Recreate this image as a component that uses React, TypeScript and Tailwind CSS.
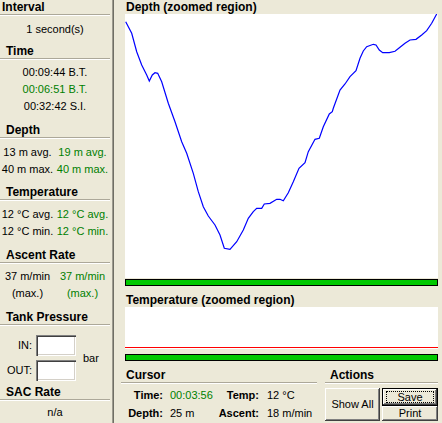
import React from "react";

// depth trace, in page pixels (chart box starts at 125,14)
const depthTrace: Array<[number, number]> = [
  [125.7, 21.7], [131.7, 33.3], [136.7, 51.7], [141.7, 65], [146.7, 75], [149.3, 81],
  [152.3, 75], [155, 72.7], [157.7, 73.3], [161.7, 81.7], [168.3, 103.3], [175, 121.7],
  [181.7, 141.7], [186.7, 153.3], [193.3, 173.3], [198.3, 191.7], [203.3, 206.7],
  [208.3, 216], [215, 225], [220, 235], [224.3, 248.3], [230, 249.3], [236.7, 241.7],
  [243.3, 230], [248.3, 218.3], [253.3, 211.7], [256.7, 208.3], [261.7, 208.3],
  [264.3, 204], [270, 203.3], [276.7, 199.3], [280, 199.3], [283.3, 200.7],
  [288.3, 192.7], [293.3, 181.7], [299, 168.3], [305, 162.7], [308.3, 151.7],
  [315, 139.3], [319.3, 138.3], [323.3, 126.7], [329.3, 114], [332.3, 111.7],
  [333.3, 108.3], [340, 90], [345, 84], [350, 76.7], [356, 70.7], [360, 58.3],
  [363.3, 51], [366.7, 46.7], [373.3, 44.3], [376, 45], [379.3, 50], [382.7, 52.7],
  [389.3, 52.7], [395, 51.3], [400, 47.3], [405, 43.3], [410, 40], [416, 39.3],
  [421.7, 35], [426.7, 30.7], [431.7, 23.3], [436.7, 14],
];

function Header({ title, first }: { title: string; first?: boolean }) {
  return (
    <div>
      <div className={`h-[14px] leading-[14px] text-[12px] font-bold ${first ? "pl-[2px]" : "pl-[6px]"}`}>{title}</div>
      <div className="w-[110px] h-[2px] border-t border-t-[#aca899] border-b border-b-white" />
    </div>
  );
}

function Row({ children, className = "" }: { children: React.ReactNode; className?: string }) {
  return <div className={`h-[17px] leading-[17px] w-[110px] text-center ${className}`}>{children}</div>;
}

function PairRow({ left, right, className = "" }: { left: string; right: string; className?: string }) {
  return (
    <div className={`h-[17px] leading-[17px] w-[110px] flex ${className}`}>
      <span className="w-[55px] text-center">{left}</span>
      <span className="w-[55px] text-center text-[#008000]">{right}</span>
    </div>
  );
}

function GreenBar() {
  return <div className="ml-[10px] w-[313px] h-[7px] border border-black bg-[#00c800]" />;
}

const btn =
  "relative bg-[#ece9d8] text-[11px] leading-none shadow-[inset_-1px_-1px_0_#404040,inset_1px_1px_0_#ffffff,inset_-2px_-2px_0_#808080] flex items-center justify-center";

const field =
  "w-[40px] h-[21px] bg-white shadow-[inset_1px_1px_0_#808080,inset_2px_2px_0_#404040,inset_-1px_-1px_0_#ffffff,inset_-2px_-2px_0_#d4d0c8]";

export default function App() {
  return (
    <div className="w-[442px] h-[423px] overflow-hidden bg-[#ece9d8] flex font-['Liberation_Sans',Arial,sans-serif] text-[11px] text-black">
      {/* left info panel */}
      <div className="w-[112px] flex flex-col [&>*]:shrink-0">
        <Header title="Interval" first />
        <Row className="mt-[5px]">1 second(s)</Row>

        <div className="mt-[6px]"><Header title="Time" /></div>
        <Row className="mt-[4px]">00:09:44 B.T.</Row>
        <Row className="text-[#008000]">00:06:51 B.T.</Row>
        <Row>00:32:42 S.I.</Row>

        <div className="mt-[8px]"><Header title="Depth" /></div>
        <PairRow className="mt-[5px]" left="13 m avg." right="19 m avg." />
        <PairRow left="40 m max." right="40 m max." />

        <div className="mt-[7px]"><Header title="Temperature" /></div>
        <PairRow className="mt-[5px]" left="12 °C avg." right="12 °C avg." />
        <PairRow left="12 °C min." right="12 °C min." />

        <div className="mt-[8px]"><Header title="Ascent Rate" /></div>
        <PairRow className="mt-[4px]" left="37 m/min" right="37 m/min" />
        <PairRow left="(max.)" right="(max.)" />

        <div className="mt-[8px]"><Header title="Tank Pressure" /></div>
        <div className="mt-[9px] flex">
          <div className="w-[36px] flex flex-col">
            <div className="h-[21px] leading-[21px] text-right pr-[4px]">IN:</div>
            <div className="h-[21px] leading-[21px] mt-[4px] text-right pr-[4px]">OUT:</div>
          </div>
          <div className="flex flex-col gap-[4px]">
            <div className={field} />
            <div className={field} />
          </div>
          <div className="self-center ml-[7px]">bar</div>
        </div>

        <div className="mt-[4px]"><Header title="SAC Rate" /></div>
        <Row className="mt-[3px]">n/a</Row>
      </div>

      {/* splitter */}
      <div className="w-px bg-[#9d9b8f]" />
      <div className="w-px bg-[#6f6e64]" />
      <div className="w-px" />

      {/* charts + cursor */}
      <div className="flex-1 flex flex-col [&>*]:shrink-0">
        <div className="h-[14px] leading-[14px] pl-[11px] text-[12px] font-bold">Depth (zoomed region)</div>
        <div className="ml-[10px] w-[313px] h-[264px] bg-white">
          <svg width="313" height="264" viewBox="125 14 313 264" className="block">
            <polyline
              points={depthTrace.map(([x, y]) => `${x},${y}`).join(" ")}
              fill="none"
              stroke="#0000ff"
              strokeWidth={1.2}
            />
          </svg>
        </div>
        <div className="mt-[1px]"><GreenBar /></div>

        <div className="mt-[7px] h-[14px] leading-[14px] pl-[11px] text-[12px] font-bold">Temperature (zoomed region)</div>
        <div className="ml-[10px] w-[313px] h-[42px] bg-white flex flex-col justify-end pb-[1px]">
          <div className="h-px bg-[#ff0000]" />
        </div>
        <div className="mt-[5px]"><GreenBar /></div>

        <div className="mt-[7px] flex items-start">
          {/* cursor readout */}
          <div className="ml-[6px] w-[196px]">
            <div className="h-[14px] leading-[14px] pl-[5px] text-[12px] font-bold">Cursor</div>
            <div className="h-[2px] border-t border-t-[#aca899] border-b border-b-white" />
            <div className="mt-[2px] h-[18px] leading-[18px] flex">
              <span className="w-[42px] text-right font-bold">Time:</span>
              <span className="ml-[7px] w-[48px] text-[#008000]">00:03:56</span>
              <span className="w-[41px] text-right font-bold">Temp:</span>
              <span className="ml-[8px]">12 °C</span>
            </div>
            <div className="h-[18px] leading-[18px] flex">
              <span className="w-[42px] text-right font-bold">Depth:</span>
              <span className="ml-[7px] w-[48px]">25 m</span>
              <span className="w-[41px] text-right font-bold">Ascent:</span>
              <span className="ml-[8px]">18 m/min</span>
            </div>
          </div>

          {/* actions */}
          <div className="ml-[8px] w-[113px]">
            <div className="h-[14px] leading-[14px] pl-[5px] text-[12px] font-bold">Actions</div>
            <div className="h-[2px] border-t border-t-[#aca899] border-b border-b-white" />
            <div className="mt-[4px] flex items-start">
              <button type="button" className={`${btn} w-[55px] h-[33px]`}>Show All</button>
              <div className="ml-[2px] flex flex-col">
                <div className="w-[56px] h-[18px] border border-black">
                  <button type="button" className={`${btn} w-full h-full`}>
                    <span className="absolute inset-x-[3px] inset-y-[2px] border border-dotted border-black" />
                    Save
                  </button>
                </div>
                <button type="button" className={`${btn} w-[56px] h-[15px]`}>Print</button>
              </div>
            </div>
          </div>
        </div>
      </div>
    </div>
  );
}
